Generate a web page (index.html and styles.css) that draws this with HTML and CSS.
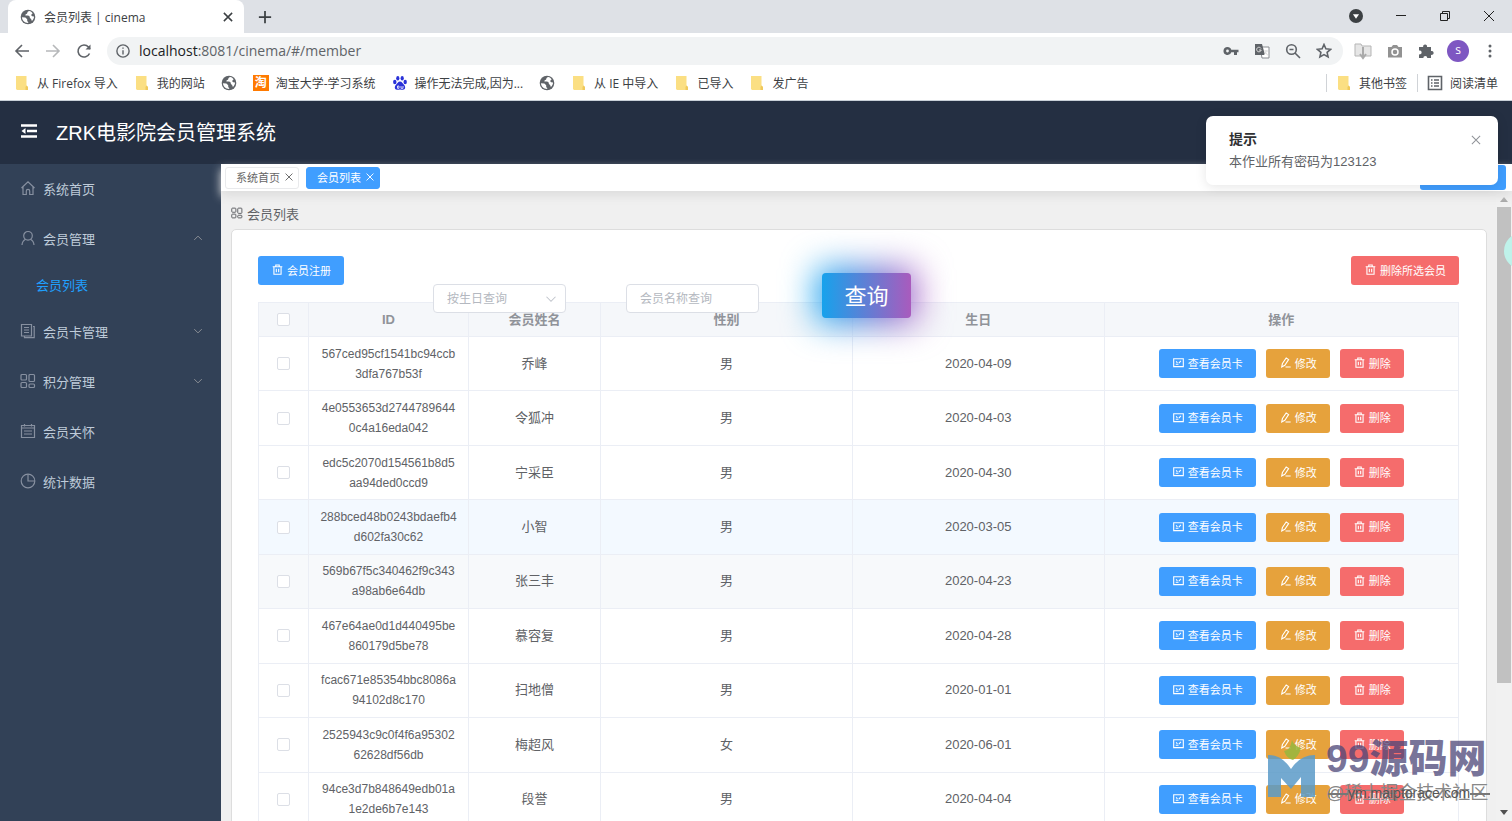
FILE: index.html
```html
<!DOCTYPE html>
<html lang="zh-CN">
  <head>
    <meta charset="UTF-8" />
    <meta name="viewport" content="width=device-width, initial-scale=1.0" />
    <title>会员列表 | cinema</title>
    <link rel="stylesheet" href="styles.css">
  </head>
  <body>
    <svg class="sprite" aria-hidden="true">
      <symbol id="globe" viewBox="0 0 16 16">
        <circle cx="8" cy="8" r="7.3" fill="#5f6368" />
        <path d="M2 8.3l3.4.2 1.8 1.8v1.4l1.3 2.3c-3.6.2-6.4-2.2-6.5-5.7zM9.3 2.1C8.2 2.4 7.2 3.2 7.2 4.2c0 .8-1.9.8-1.9 1.8 0 .8 1.3.6 2.5.6 1.4 0 2 .8 2 1.9 0 1 1.2.8 1.5 1.9l.6 1.5c1.4-1.1 2.2-2.6 2.1-4.3l-1.8-.4-1.2-1.3 1.6-1.5c-.8-1.2-1.9-2-3.3-2.3z" fill="#fff" />
      </symbol>
      <symbol id="folder" viewBox="0 0 16 16">
        <path d="M2 1h10.5v9.5L14 12v3H3L2 14z" fill="#fbdf83" />
        <path d="M12.500 10.500L14 12v3h-2.500v-3z" fill="#f0c95c" />
      </symbol>
      <symbol id="home" viewBox="0 0 16 16">
        <path d="M1.500 8L8 1.800 14.500 8M3 6.800V14.500h3.300V11a1.700 1.700 0 0 1 3.400 0v3.500H13V6.800" />
      </symbol>
      <symbol id="user" viewBox="0 0 16 16">
        <circle cx="8" cy="5.800" r="4.300" />
        <path d="M2 15c.2-3 1.600-4.800 3.600-5.800M14 15c-.2-3-1.600-4.800-3.600-5.800" />
      </symbol>
      <symbol id="copy" viewBox="0 0 16 16">
        <path d="M1.500 1.500h10v11.500h-10zM4 4.500h5M4 7h5M4 9.500h5M13 3.500h1.200v11.200H4.500V13.500" />
      </symbol>
      <symbol id="grid" viewBox="0 0 16 16">
        <rect x="1" y="1.500" width="5.500" height="5.500" rx="1" />
        <rect x="9" y="1.500" width="5.500" height="7" rx="1" />
        <rect x="1" y="9.500" width="5.500" height="5" rx="1" />
        <rect x="9" y="11" width="5.500" height="3.500" rx="1" />
      </symbol>
      <symbol id="list" viewBox="0 0 16 16">
        <path d="M1.500 2.500h13v12h-13zM4.500 1v2.500M11.500 1v2.500M1.500 5h13M4 8h8M4 11h8" />
      </symbol>
      <symbol id="pie" viewBox="0 0 16 16">
        <circle cx="8" cy="8" r="6.800" />
        <path d="M8 1.200V8h6.800" />
      </symbol>
      <symbol id="down" viewBox="0 0 16 16"><path d="M2 5l6 6 6-6" /></symbol>
      <symbol id="up" viewBox="0 0 16 16"><path d="M2 11l6-6 6 6" /></symbol>
      <symbol id="close" viewBox="0 0 16 16"><path d="M2.500 2.500l11 11M13.500 2.500l-11 11" /></symbol>
      <symbol id="trash" viewBox="0 0 16 16">
        <path d="M1 4h14M5.500 3.500V1.500h5v2M2.800 4v10.800h10.400V4M6.300 7v5M9.700 7v5" />
      </symbol>
      <symbol id="card" viewBox="0 0 16 16">
        <path d="M1 2.500h14v11.500H1zM4 10.500h4M4.500 6.500l2 2M8.500 9l3-3.500" />
      </symbol>
      <symbol id="edit" viewBox="0 0 16 16">
        <path d="M3.500 9.500L9 1.500l3.500 2.300L7 12l-4.500 2.500zM8 14.500h7.500" />
      </symbol>
    </svg>

    <div class="tab-strip">
      <div class="browser-tab">
        <svg class="i16"><use href="#globe" /></svg>
        <span>会员列表 | cinema</span>
        <button class="plain" aria-label="关闭标签"><svg class="i12 line dark"><use href="#close" /></svg></button>
      </div>
      <button class="plain new-tab" aria-label="新标签页"><svg class="i14 line dark" viewBox="0 0 16 16"><path d="M8 1v14M1 8h14" /></svg></button>
      <div class="window-buttons">
        <button class="plain" aria-label="搜索标签页"><svg class="i14" viewBox="0 0 16 16"><circle cx="8" cy="8" r="8" fill="#3c4043" /><path d="M4.500 6h7L8 11z" fill="#fff" /></svg></button>
        <button class="plain" aria-label="最小化"><svg class="i12 thin" viewBox="0 0 12 12"><path d="M1 5.500h10" /></svg></button>
        <button class="plain" aria-label="还原"><svg class="i12 thin" viewBox="0 0 12 12"><path d="M1.500 3.500h7v7h-7zM3.500 3V1.500h7v7H9" /></svg></button>
        <button class="plain" aria-label="关闭"><svg class="i12 thin" viewBox="0 0 12 12"><path d="M1 1l10 10M11 1L1 11" /></svg></button>
      </div>
    </div>

    <div class="toolbar">
      <button class="plain" aria-label="后退"><svg class="i16 line" viewBox="0 0 16 16"><path d="M15 8H2M8 2L2 8l6 6" /></svg></button>
      <button class="plain faded" aria-label="前进"><svg class="i16 line" viewBox="0 0 16 16"><path d="M1 8h13M8 2l6 6-6 6" /></svg></button>
      <button class="plain" aria-label="刷新"><svg class="i16 line" viewBox="0 0 16 16"><path d="M13.500 10.500A6 6 0 1 1 12.500 4L14 6" /><path d="M14.500 1.500v5h-5z" fill="#5f6368" stroke="none" /></svg></button>
      <div class="address">
        <svg class="i14 line" viewBox="0 0 16 16"><circle cx="8" cy="8" r="7" /><path d="M8 7v5M8 4v1.500" /></svg>
        <span class="url"><b>localhost</b>:8081/cinema/#/member</span>
        <svg class="i16" viewBox="0 0 16 16"><path d="M4.500 4a4 4 0 1 0 3.800 5.200H11V12h3V9.200h1.500V6.800H8.300A4 4 0 0 0 4.500 4zm0 2.600a1.400 1.400 0 1 1 0 2.800 1.400 1.400 0 0 1 0-2.800z" fill="#5f6368" /></svg>
        <svg class="i16" viewBox="0 0 16 16"><path d="M6 4h9v11H8z" fill="#fff" stroke="#8a8d91" /><path d="M1 1h7l3 11H1z" fill="#5f6368" /><path d="M7 5.500A2.300 2.300 0 1 0 7.200 7H5M10 8h4M12 7v1c0 2-1 3-2 4M11 9l3 3.500" fill="none" stroke="#ddd" /></svg>
        <svg class="i16 line" viewBox="0 0 16 16"><circle cx="6.500" cy="6.500" r="4.800" /><path d="M10 10l5 5M4.500 6.500h4" /></svg>
        <svg class="i16 line" viewBox="0 0 16 16"><path d="M8 1.500l1.900 4.300 4.700.5-3.500 3.100 1 4.600L8 11.600 3.900 14l1-4.600L1.400 6.300l4.700-.5z" /></svg>
      </div>
      <svg class="i18" viewBox="0 0 18 18"><path d="M1 2h6l1 2h9v10H1z" fill="#e6e6e6" stroke="#b5b5b5" /><path d="M9 5v10M6 12l3 4 3-4" fill="none" stroke="#aaa" stroke-width="2" /></svg>
      <svg class="i16" viewBox="0 0 16 16"><path d="M1 4h3.500L6 2h4l1.500 2H15v10.500H1z" fill="#929292" /><circle cx="8" cy="9" r="3" fill="#929292" stroke="#fff" stroke-width="1.500" /></svg>
      <svg class="i16" viewBox="0 0 16 16"><path d="M1 4h4.200a2 2 0 1 1 3.800 0h4v4a2 2 0 1 1 0 3.800V15H9.300a2 2 0 1 0-4 0H1v-3.700a2 2 0 1 0 0-3.800z" fill="#5f6368" /></svg>
      <span class="avatar">s</span>
      <button class="plain" aria-label="更多"><svg class="i16" viewBox="0 0 16 16" fill="#5f6368"><circle cx="8" cy="3" r="1.500" /><circle cx="8" cy="8" r="1.500" /><circle cx="8" cy="13" r="1.500" /></svg></button>
    </div>

    <nav class="bookmarks">
      <a href="#"><svg class="i16"><use href="#folder" /></svg>从 Firefox 导入</a>
      <a href="#"><svg class="i16"><use href="#folder" /></svg>我的网站</a>
      <a href="#" aria-label="网页"><svg class="i16"><use href="#globe" /></svg></a>
      <a href="#"><span class="tao">淘</span>淘宝大学-学习系统</a>
      <a href="#"><svg class="i16" viewBox="0 0 16 16" fill="#2a32d8"><ellipse cx="2.800" cy="7" rx="1.700" ry="2.200" /><ellipse cx="5.800" cy="3.200" rx="1.600" ry="2.200" /><ellipse cx="10.200" cy="3.200" rx="1.600" ry="2.200" /><ellipse cx="13.200" cy="7" rx="1.700" ry="2.200" /><path d="M8 6.500c2 0 2.700 2 4 3.300 2 2 1.300 5-1 5-1.200 0-2-.3-3-.3s-1.800.3-3 .3c-2.300 0-3-3-1-5C5.300 8.500 6 6.500 8 6.500z" /><path d="M5.500 11h1.500v2.300H5.500zM9 11v2.300h2V11" fill="none" stroke="#fff" stroke-width=".8" /></svg>操作无法完成,因为...</a>
      <a href="#" aria-label="网页"><svg class="i16"><use href="#globe" /></svg></a>
      <a href="#"><svg class="i16"><use href="#folder" /></svg>从 IE 中导入</a>
      <a href="#"><svg class="i16"><use href="#folder" /></svg>已导入</a>
      <a href="#"><svg class="i16"><use href="#folder" /></svg>发广告</a>
      <a href="#" class="other"><svg class="i16"><use href="#folder" /></svg>其他书签</a>
      <a href="#" class="reading"><svg class="i16 line" viewBox="0 0 16 16"><path d="M1.500 1.500h13v13h-13zM4 5h1.500M7 5h5M4 8h1.500M7 8h5M4 11h1.500M7 11h5" /></svg>阅读清单</a>
    </nav>

    <header class="header">
      <button class="plain" aria-label="折叠菜单"><svg class="i16" viewBox="0 0 16 16" stroke="#fff" stroke-width="2.500" fill="none"><path d="M0 2.500h16M6 8h10M0 13.500h16" /><path d="M4.500 5v6L.5 8z" fill="#fff" stroke="none" /></svg></button>
      <h1>ZRK电影院会员管理系统</h1>
    </header>

    <div class="wrapper">
      <nav class="sidebar">
        <a href="#"><svg class="i16 menu-icon"><use href="#home" /></svg>系统首页</a>
        <a href="#"><svg class="i16 menu-icon"><use href="#user" /></svg>会员管理<svg class="arrow"><use href="#up" /></svg></a>
        <a href="#" class="sub">会员列表</a>
        <a href="#"><svg class="i16 menu-icon"><use href="#copy" /></svg>会员卡管理<svg class="arrow"><use href="#down" /></svg></a>
        <a href="#"><svg class="i16 menu-icon"><use href="#grid" /></svg>积分管理<svg class="arrow"><use href="#down" /></svg></a>
        <a href="#"><svg class="i16 menu-icon"><use href="#list" /></svg>会员关怀</a>
        <a href="#"><svg class="i16 menu-icon"><use href="#pie" /></svg>统计数据</a>
      </nav>

      <main class="main">
        <div class="tags">
          <a href="#" class="tag">系统首页<svg><use href="#close" /></svg></a>
          <a href="#" class="tag active">会员列表<svg><use href="#close" /></svg></a>
          <button class="tags-menu" aria-label="标签选项"></button>
        </div>

        <div class="scroll-area">
          <div class="content">
            <div class="crumb"><svg><use href="#grid" /></svg>会员列表</div>
            <section class="card">
              <div class="card-bar">
                <button class="btn blue"><svg><use href="#trash" /></svg>会员注册</button>
                <button class="btn red"><svg><use href="#trash" /></svg>删除所选会员</button>
              </div>
              <form class="filters">
                <div class="select-box">
                  <select aria-label="按生日查询"><option>按生日查询</option></select>
                  <svg><use href="#down" /></svg>
                </div>
                <input type="text" class="name-input" placeholder="会员名称查询" aria-label="会员名称查询">
                <button type="button" class="search">查询</button>
              </form>
              <table>
                <colgroup>
                  <col class="c-check"><col class="c-id"><col class="c-name"><col class="c-mid"><col class="c-mid"><col>
                </colgroup>
                <thead>
                  <tr>
                    <th><input type="checkbox" aria-label="全选"></th>
                    <th>ID</th>
                    <th>会员姓名</th>
                    <th>性别</th>
                    <th>生日</th>
                    <th>操作</th>
                  </tr>
                </thead>
                <tbody>
                  <tr>
                    <td><input type="checkbox" aria-label="选择乔峰"></td>
                    <td class="uid">567ced95cf1541bc94ccb<wbr>3dfa767b53f</td>
                    <td>乔峰</td>
                    <td>男</td>
                    <td>2020-04-09</td>
                    <td><div class="actions">
                      <button class="btn blue"><svg><use href="#card" /></svg>查看会员卡</button>
                      <button class="btn orange"><svg><use href="#edit" /></svg>修改</button>
                      <button class="btn red"><svg><use href="#trash" /></svg>删除</button>
                    </div></td>
                  </tr>
                  <tr>
                    <td><input type="checkbox" aria-label="选择令狐冲"></td>
                    <td class="uid">4e0553653d2744789644<wbr>0c4a16eda042</td>
                    <td>令狐冲</td>
                    <td>男</td>
                    <td>2020-04-03</td>
                    <td><div class="actions">
                      <button class="btn blue"><svg><use href="#card" /></svg>查看会员卡</button>
                      <button class="btn orange"><svg><use href="#edit" /></svg>修改</button>
                      <button class="btn red"><svg><use href="#trash" /></svg>删除</button>
                    </div></td>
                  </tr>
                  <tr>
                    <td><input type="checkbox" aria-label="选择宁采臣"></td>
                    <td class="uid">edc5c2070d154561b8d5<wbr>aa94ded0ccd9</td>
                    <td>宁采臣</td>
                    <td>男</td>
                    <td>2020-04-30</td>
                    <td><div class="actions">
                      <button class="btn blue"><svg><use href="#card" /></svg>查看会员卡</button>
                      <button class="btn orange"><svg><use href="#edit" /></svg>修改</button>
                      <button class="btn red"><svg><use href="#trash" /></svg>删除</button>
                    </div></td>
                  </tr>
                  <tr class="current">
                    <td><input type="checkbox" aria-label="选择小智"></td>
                    <td class="uid">288bced48b0243bdaefb4<wbr>d602fa30c62</td>
                    <td>小智</td>
                    <td>男</td>
                    <td>2020-03-05</td>
                    <td><div class="actions">
                      <button class="btn blue"><svg><use href="#card" /></svg>查看会员卡</button>
                      <button class="btn orange"><svg><use href="#edit" /></svg>修改</button>
                      <button class="btn red"><svg><use href="#trash" /></svg>删除</button>
                    </div></td>
                  </tr>
                  <tr class="hovered">
                    <td><input type="checkbox" aria-label="选择张三丰"></td>
                    <td class="uid">569b67f5c340462f9c343<wbr>a98ab6e64db</td>
                    <td>张三丰</td>
                    <td>男</td>
                    <td>2020-04-23</td>
                    <td><div class="actions">
                      <button class="btn blue"><svg><use href="#card" /></svg>查看会员卡</button>
                      <button class="btn orange"><svg><use href="#edit" /></svg>修改</button>
                      <button class="btn red"><svg><use href="#trash" /></svg>删除</button>
                    </div></td>
                  </tr>
                  <tr>
                    <td><input type="checkbox" aria-label="选择慕容复"></td>
                    <td class="uid">467e64ae0d1d440495be<wbr>860179d5be78</td>
                    <td>慕容复</td>
                    <td>男</td>
                    <td>2020-04-28</td>
                    <td><div class="actions">
                      <button class="btn blue"><svg><use href="#card" /></svg>查看会员卡</button>
                      <button class="btn orange"><svg><use href="#edit" /></svg>修改</button>
                      <button class="btn red"><svg><use href="#trash" /></svg>删除</button>
                    </div></td>
                  </tr>
                  <tr>
                    <td><input type="checkbox" aria-label="选择扫地僧"></td>
                    <td class="uid">fcac671e85354bbc8086a<wbr>94102d8c170</td>
                    <td>扫地僧</td>
                    <td>男</td>
                    <td>2020-01-01</td>
                    <td><div class="actions">
                      <button class="btn blue"><svg><use href="#card" /></svg>查看会员卡</button>
                      <button class="btn orange"><svg><use href="#edit" /></svg>修改</button>
                      <button class="btn red"><svg><use href="#trash" /></svg>删除</button>
                    </div></td>
                  </tr>
                  <tr>
                    <td><input type="checkbox" aria-label="选择梅超风"></td>
                    <td class="uid">2525943c9c0f4f6a95302<wbr>62628df56db</td>
                    <td>梅超风</td>
                    <td>女</td>
                    <td>2020-06-01</td>
                    <td><div class="actions">
                      <button class="btn blue"><svg><use href="#card" /></svg>查看会员卡</button>
                      <button class="btn orange"><svg><use href="#edit" /></svg>修改</button>
                      <button class="btn red"><svg><use href="#trash" /></svg>删除</button>
                    </div></td>
                  </tr>
                  <tr>
                    <td><input type="checkbox" aria-label="选择段誉"></td>
                    <td class="uid">94ce3d7b848649edb01a<wbr>1e2de6b7e143</td>
                    <td>段誉</td>
                    <td>男</td>
                    <td>2020-04-04</td>
                    <td><div class="actions">
                      <button class="btn blue"><svg><use href="#card" /></svg>查看会员卡</button>
                      <button class="btn orange"><svg><use href="#edit" /></svg>修改</button>
                      <button class="btn red"><svg><use href="#trash" /></svg>删除</button>
                    </div></td>
                  </tr>
                </tbody>
              </table>
            </section>
          </div>
          <div class="scrollbar">
            <svg viewBox="0 0 8 5"><path d="M0 5l4-5 4 5z" fill="#a3a3a3" /></svg>
            <div class="thumb"></div>
            <svg viewBox="0 0 8 5"><path d="M0 0l4 5 4-5z" fill="#505050" /></svg>
          </div>
        </div>
      </main>
    </div>

    <div class="notice" role="alert">
      <h2>提示</h2>
      <p>本作业所有密码为123123</p>
      <button class="plain" aria-label="关闭提示"><svg><use href="#close" /></svg></button>
    </div>
    <div class="bubble"></div>

    <div class="watermark">
      <svg viewBox="0 0 48 60">
        <path d="M0 15q14 0 23 14Q32 15 47 15v42H33V37L23 49 13 38v19H0z" fill="#5b9bc8" />
        <path d="M24 0q2 6 9 8-2 8-8 12-6-1-9-9 6 0 8-11z" fill="#97b83f" />
      </svg>
      <div class="mark-text">
        <strong>99源码网</strong>
        <span class="community">@稀土掘金技术社区</span>
        <span class="site">ym.maiptorace.com</span>
      </div>
    </div>
  </body>
</html>
```
FILE: styles.css
```css
* {
  box-sizing: border-box;
}
body {
  margin: 0;
  height: 100vh;
  display: flex;
  flex-direction: column;
  overflow: hidden;
  position: relative;
  font-family: 'Liberation Sans', 'Noto Sans CJK SC', sans-serif;
  font-size: 13px;
  color: #606266;
  background: #fff;
}
a {
  color: inherit;
  text-decoration: none;
}
svg {
  flex: none;
  display: block;
}
button,
input,
select {
  font-family: inherit;
}
.sprite {
  position: absolute;
  width: 0;
  height: 0;
}
.plain {
  display: flex;
  padding: 0;
  border: 0;
  background: none;
}
.i12 {
  width: 12px;
  height: 12px;
}
.i14 {
  width: 14px;
  height: 14px;
}
.i16 {
  width: 16px;
  height: 16px;
}
.i18 {
  width: 18px;
  height: 18px;
}
.line {
  fill: none;
  stroke: #5f6368;
  stroke-width: 1.6;
}
.dark {
  stroke: #3c4043;
  stroke-width: 2;
}
.thin {
  fill: none;
  stroke: #222;
  stroke-width: 1;
}

/* browser */
.tab-strip,
.toolbar,
.bookmarks {
  display: flex;
  flex: none;
  align-items: center;
  font-family: 'Open Sans', 'Noto Sans CJK SC', sans-serif;
  font-size: 12px;
  color: #3c4043;
}
.tab-strip {
  height: 33px;
  padding-left: 8px;
  background: #dee1e6;
}
.browser-tab {
  display: flex;
  align-items: center;
  gap: 8px;
  width: 236px;
  height: 33px;
  padding: 0 10px 0 12px;
  border-radius: 8px 8px 0 0;
  background: #fff;
}
.browser-tab span {
  flex: 1;
}
.new-tab {
  margin-left: 14px;
}
.window-buttons {
  display: flex;
  align-items: center;
  gap: 32px;
  margin-left: auto;
  padding: 0 17px 2px 0;
}
.toolbar {
  height: 35px;
  gap: 15px;
  padding: 0 14px;
}
.faded {
  opacity: 0.45;
}
.address {
  display: flex;
  flex: 1;
  align-items: center;
  gap: 15px;
  height: 28px;
  margin-right: -4px;
  padding: 0 11px 0 9px;
  border-radius: 14px;
  background: #f1f3f4;
}
.url {
  flex: 1;
  margin-left: -6px;
  font-size: 14px;
  color: #5f6368;
}
.url b {
  font-weight: 400;
  color: #202124;
}
.avatar {
  width: 22px;
  height: 22px;
  margin: 0 -2px;
  border-radius: 50%;
  background: #7e57c2;
  color: #fff;
  font-size: 12px;
  line-height: 20px;
  text-align: center;
}
.bookmarks {
  height: 33px;
  gap: 16px;
  padding: 0 14px 2px;
  border-bottom: 1px solid #c8d0d8;
}
.bookmarks a {
  display: flex;
  align-items: center;
  gap: 7px;
  white-space: nowrap;
}
.bookmarks .other {
  margin-right: -6px;
  margin-left: auto;
}
.bookmarks .other,
.bookmarks .reading {
  padding-left: 9px;
  border-left: 1px solid #d0d3d7;
}
.tao {
  width: 16px;
  height: 16px;
  background: #ff7a00;
  color: #fff;
  font-size: 12px;
  font-weight: 700;
  line-height: 15px;
  text-align: center;
}

/* header */
.header {
  display: flex;
  flex: none;
  align-items: center;
  gap: 19px;
  height: 63px;
  padding: 0 0 3px 21px;
  background: #242f42;
  color: #fff;
}
.header h1 {
  margin: 0;
  font-size: 20px;
  font-weight: 400;
}
.wrapper {
  display: flex;
  flex: 1;
  min-height: 0;
}

/* sidebar */
.sidebar {
  flex: none;
  width: 221px;
  background: #324157;
  color: #bfcbd9;
}
.sidebar a {
  display: flex;
  align-items: center;
  gap: 7px;
  height: 50px;
  padding: 0 18px 2px 20px;
}
.sidebar .sub {
  height: 43px;
  padding-left: 36px;
  color: #20a0ff;
}
.menu-icon {
  fill: none;
  stroke: #8790a0;
  stroke-width: 1.2;
}
.arrow {
  width: 10px;
  height: 10px;
  margin-left: auto;
  fill: none;
  stroke: #909399;
  stroke-width: 1.5;
}

/* content */
.main {
  display: flex;
  flex: 1;
  flex-direction: column;
  min-width: 0;
  background: #f0f0f0;
}
.tags {
  display: flex;
  flex: none;
  align-items: center;
  gap: 7px;
  height: 27px;
  padding: 0 6px 0 4px;
  background: #fff;
  box-shadow: 0 5px 10px #ddd;
  z-index: 1;
}
.tag {
  display: flex;
  align-items: center;
  gap: 4px;
  height: 22px;
  padding: 0 4px 2px 10px;
  border: 1px solid #e9eaec;
  border-radius: 3px;
  font-size: 11px;
  color: #666;
}
.tag svg {
  width: 10px;
  height: 10px;
  fill: none;
  stroke: currentColor;
  stroke-width: 1.5;
}
.tag.active {
  border-color: #409eff;
  background: #409eff;
  color: #fff;
}
.tags-menu {
  width: 86px;
  height: 25px;
  margin-left: auto;
  border: 0;
  border-radius: 3px;
  background: #409eff;
}
.scroll-area {
  display: flex;
  flex: 1;
  min-height: 0;
}
.content {
  flex: 1;
  min-width: 0;
  padding: 12px 9px 0 10px;
  overflow: hidden;
}
.crumb {
  display: flex;
  align-items: center;
  gap: 4px;
  height: 20px;
  margin-bottom: 6px;
}
.crumb svg {
  width: 12px;
  height: 12px;
  fill: none;
  stroke: #606266;
  stroke-width: 1.3;
}
.card {
  position: relative;
  padding: 26px 27px 27px 26px;
  border: 1px solid #ddd;
  border-radius: 5px;
  background: #fff;
}
.card-bar {
  display: flex;
  justify-content: space-between;
  margin-bottom: 17px;
}
.btn {
  display: flex;
  align-items: center;
  gap: 4px;
  height: 29px;
  padding: 0 13px 2px 14px;
  border: 0;
  border-radius: 3px;
  color: #fff;
  font-size: 11px;
  white-space: nowrap;
}
.btn svg {
  width: 11px;
  height: 11px;
  fill: none;
  stroke: #fff;
  stroke-width: 1.6;
}
.blue {
  background: #409eff;
}
.orange {
  background: #e6a23c;
}
.red {
  background: #f56c6c;
}

/* the filter row overlaps the table header */
.filters {
  display: flex;
  position: absolute;
  top: 43px;
  left: 201px;
  z-index: 1;
}
.select-box {
  position: relative;
  margin: 11px 60px 0 0;
}
.select-box select,
.name-input {
  width: 133px;
  height: 29px;
  padding: 0 13px;
  border: 1px solid #dcdfe6;
  border-radius: 4px;
  background: #fff;
  color: #b4b8c0;
  font-size: 12px;
  appearance: none;
}
.select-box svg {
  position: absolute;
  top: 9px;
  right: 9px;
  width: 12px;
  height: 12px;
  fill: none;
  stroke: #c0c4cc;
  stroke-width: 1.4;
}
.name-input {
  margin: 11px 63px 0 0;
}
.name-input::placeholder {
  color: #b4b8c0;
}
.search {
  position: relative;
  width: 89px;
  height: 45px;
  padding: 0 0 3px;
  border: 0;
  border-radius: 4px;
  background: linear-gradient(90deg, #17a2ec, #a95bbd);
  color: #fff;
  font-size: 22px;
}
.search::before {
  content: '';
  position: absolute;
  inset: -5px;
  z-index: -1;
  border-radius: 4px;
  background: linear-gradient(90deg, #03a9f4, #b45ac0);
  filter: blur(17px);
}

table {
  width: 100%;
  height: 526px;
  border: 1px solid #ebeef5;
  border-spacing: 0;
  table-layout: fixed;
}
.c-check {
  width: 50px;
}
.c-id {
  width: 160px;
}
.c-name {
  width: 132px;
}
.c-mid {
  width: 21%;
}
th,
td {
  padding: 0 9px;
  border-right: 1px solid #ebeef5;
  border-bottom: 1px solid #ebeef5;
  line-height: 20px;
  text-align: center;
}
td {
  height: 54px;
}
th {
  height: 34px;
  background: #f5f7fa;
  color: #909399;
  font-weight: 700;
}
th:first-child,
td:first-child {
  padding: 0;
}
th:last-child,
td:last-child {
  border-right: 0;
}
.uid {
  font-size: 12px;
}
.current td {
  background: #f3f9ff;
}
.hovered td {
  background: #f7f9fb;
}
input[type='checkbox'] {
  display: block;
  width: 13px;
  height: 13px;
  margin: 0 auto;
  border: 1px solid #dcdfe6;
  border-radius: 2px;
  background: #fff;
  appearance: none;
}
.actions {
  display: flex;
  justify-content: center;
  gap: 10px;
}
.scrollbar {
  display: flex;
  flex: none;
  flex-direction: column;
  align-items: center;
  width: 16px;
  padding: 6px 1px;
  background: #f1f1f1;
}
.scrollbar svg {
  width: 8px;
  height: 5px;
}
.thumb {
  width: 100%;
  height: 77%;
  margin: 5px 0 auto;
  background: #c1c1c1;
}

/* floating */
.notice {
  position: absolute;
  top: 116px;
  right: 14px;
  z-index: 3;
  width: 292px;
  padding: 13px 23px;
  border-radius: 7px;
  background: #fff;
  box-shadow: 0 2px 12px rgba(0, 0, 0, 0.1);
}
.notice h2 {
  margin: 0 0 3px;
  color: #303133;
  font-size: 14px;
  line-height: 20px;
}
.notice p {
  margin: 0;
  line-height: 20px;
}
.notice .plain {
  position: absolute;
  top: 18px;
  right: 16px;
}
.notice .plain svg {
  width: 12px;
  height: 12px;
  fill: none;
  stroke: #909399;
  stroke-width: 1.4;
}
.bubble {
  position: absolute;
  top: 233px;
  right: -28px;
  z-index: 3;
  width: 36px;
  height: 36px;
  border-radius: 50%;
  background: #bff2ea;
}
.watermark {
  display: flex;
  position: absolute;
  right: 18px;
  bottom: 18px;
  z-index: 3;
  gap: 10px;
  pointer-events: none;
}
.watermark > svg {
  width: 48px;
  height: 60px;
  margin-top: 5px;
  opacity: 0.85;
}
.mark-text {
  position: relative;
  width: 168px;
}
.mark-text strong {
  display: block;
  color: rgba(76, 70, 120, 0.75);
  font-size: 39px;
  font-weight: 900;
  line-height: 48px;
  white-space: nowrap;
}
.community {
  display: block;
  color: #888;
  font-size: 18px;
  line-height: 20px;
  white-space: nowrap;
}
.site {
  position: absolute;
  top: 48px;
  left: 22px;
  color: #555;
  font-size: 14px;
  line-height: 20px;
}
.site::before,
.site::after {
  content: '';
  position: absolute;
  top: 10px;
  width: 20px;
  height: 2px;
  background: #777;
}
.site::before {
  right: 100%;
}
.site::after {
  left: 100%;
}
```
